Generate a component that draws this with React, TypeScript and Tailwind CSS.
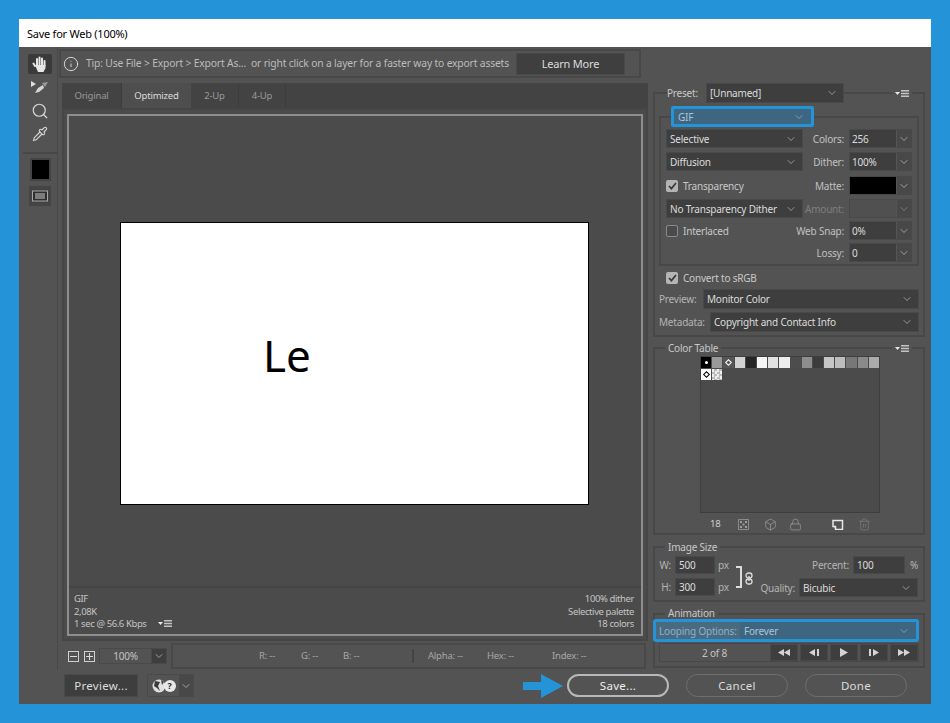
import * as React from 'react'
import { ChevronDown, Search, Pipette, Info, Box, Lock, Trash2 } from 'lucide-react'

const swatches = [
	'#000000', '#9a9a9a', '#555555', '#d2d2d2', '#252525', '#f6f6f6', '#e2e2e2', '#ececec',
	'#4d4d4d', '#8e8e8e', '#3c3c3c', '#c6c6c6', '#bdbdbd', '#777777', '#8a8a8a', '#ababab',
]

function MenuIcon() {
	return (
		<span className="flex items-center gap-px">
			<svg width="5" height="3" viewBox="0 0 5 3">
				<path d="M0 0h5L2.5 3z" fill="#e8e8e8" />
			</svg>
			<svg width="8" height="7" viewBox="0 0 8 7">
				<path d="M0 0h8v1.5H0zM0 2.7h8v1.5H0zM0 5.4h8V7H0z" fill="#c4c4c4" />
			</svg>
		</span>
	)
}

function Select({
	children,
	className,
	blue,
}: {
	children?: React.ReactNode
	className?: string
	blue?: boolean
}) {
	return (
		<div
			className={`flex items-center justify-between pl-[3px] pr-[5px] border shrink-0 ${
				blue
					? 'bg-[#3f6680] border-[#3f6680] text-[#a9c4d6]'
					: 'bg-[#3e3e3e] border-[#494949] text-[#dcdcdc]'
			} ${className ?? ''}`}
		>
			<span className="whitespace-nowrap">{children}</span>
			<ChevronDown size={12} strokeWidth={1.4} className={blue ? 'text-[#8fb4cc]' : 'text-[#bcbcbc]'} />
		</div>
	)
}

function Combo({ value, matte, off }: { value?: string; matte?: boolean; off?: boolean }) {
	return (
		<div className="flex w-[63px] h-[19px] border border-[#494949] shrink-0">
			<div
				className={`w-[47px] flex items-center pl-[2px] border-r border-[#555555] ${
					matte ? 'bg-black' : off ? 'bg-[#505050]' : 'bg-[#3e3e3e] text-[#dcdcdc]'
				}`}
			>
				{value}
			</div>
			<div className="flex-1 flex items-center justify-center bg-[#484848]">
				<ChevronDown size={12} strokeWidth={1.4} className={off ? 'text-[#8c8c8c]' : 'text-[#c4c4c4]'} />
			</div>
		</div>
	)
}

function Check({ checked, label }: { checked?: boolean; label: string }) {
	return (
		<div className="flex items-center gap-[5px] text-[#c8c8c8]">
			<span
				className={`w-[12px] h-[12px] rounded-[2px] flex items-center justify-center ${
					checked ? 'bg-[#b4b4b4]' : 'border border-[#8a8a8a] bg-[#4a4a4a]'
				}`}
			>
				{checked && (
					<svg width="9" height="8" viewBox="0 0 9 8">
						<path d="M1 4l2.4 2.6L8 1" fill="none" stroke="#3a3a3a" strokeWidth="1.7" />
					</svg>
				)}
			</span>
			{label}
		</div>
	)
}

function OptRow({
	left,
	label,
	children,
	className,
	dim,
}: {
	left: React.ReactNode
	label?: string
	children?: React.ReactNode
	className?: string
	dim?: boolean
}) {
	return (
		<div className={`flex items-center h-[19px] ${className ?? ''}`}>
			<div className="w-[137px] shrink-0">{left}</div>
			<span className={`flex-1 min-w-0 flex justify-end pr-[5px] whitespace-nowrap ${dim ? 'text-[#7e7e7e]' : 'text-[#c0c0c0]'}`}>
				{label}
			</span>
			{children}
		</div>
	)
}

function Field({ value, className }: { value: string; className?: string }) {
	return (
		<div className={`h-[18px] flex items-center pl-[3px] bg-[#3e3e3e] border border-[#494949] text-[#dcdcdc] ${className ?? ''}`}>
			{value}
		</div>
	)
}

function Transport({ d }: { d: string }) {
	return (
		<div className="w-[28px] h-[17px] flex items-center justify-center bg-[#3e3e3e] border border-[#494949]">
			<svg width="16" height="9" viewBox="0 0 16 9">
				<path d={d} fill="#d4d4d4" />
			</svg>
		</div>
	)
}

function RoundButton({ label, active, className }: { label: string; active?: boolean; className?: string }) {
	return (
		<div
			className={`w-[102px] h-[23px] rounded-full flex items-center justify-center text-[11.5px] tracking-wide ${
				active ? 'border-2 border-[#b8b8b8] text-[#eeeeee]' : 'border border-[#6e6e6e] text-[#dcdcdc]'
			} ${className ?? ''}`}
		>
			{label}
		</div>
	)
}

export default function App() {
	return (
		<div className="min-h-[723px] bg-[#2493d8] pt-[19px] pl-[19px] font-['Noto_Sans',sans-serif] text-[10px] leading-none tracking-[-0.2px]">
			<div className="w-[912px] h-[685px] flex flex-col overflow-hidden">
				<div className="h-[28px] shrink-0 bg-white text-black text-[11px] tracking-[-0.25px] flex items-center pl-[8px]">
					Save for Web (100%)
				</div>

				<div className="flex-1 flex flex-col bg-[#535353] text-[#c8c8c8]">
					<div className="flex h-[623px]">
						{/* tools */}
						<div className="w-[39px] shrink-0 border-r border-[#484848] flex flex-col items-center pt-[7px] pl-[4px]">
							<div className="w-[24px] h-[20px] bg-[#3a3a3a] rounded-[2px] flex items-center justify-center">
								<svg width="16" height="17" viewBox="0 0 16 17">
									<path
										d="M3 10L1.5 7.5M5 9V3M7.5 8.5V1.5M10 8.5V2.5M12.5 9.5V5"
										fill="none"
										stroke="#e6e6e6"
										strokeWidth="2"
										strokeLinecap="round"
									/>
									<path d="M3 9h10.5v3l-2 4H6z" fill="#e6e6e6" />
								</svg>
							</div>
							<div className="mt-[6px] h-[16px] flex items-center">
								<svg width="18" height="14" viewBox="0 0 18 14">
									<path d="M0 0l5 3-5 3z" fill="#e0e0e0" />
									<path d="M4 12l3-5 5-3 1 3-5 4z" fill="#d6d6d6" />
									<path d="M11 2l6-1-3 5z" fill="#9a9a9a" />
								</svg>
							</div>
							<Search size={18} strokeWidth={1.6} className="mt-[6px] text-[#d8d8d8]" />
							<Pipette size={16} strokeWidth={1.6} className="mt-[6px] text-[#d8d8d8]" />
							<div className="w-[34px] h-[2px] bg-[#474747] mt-[10px]" />
							<div className="mt-[4px] w-[21px] h-[23px] bg-black border-2 border-[#444444]" />
							<div className="mt-[5px] w-[22px] h-[20px] bg-[#444444] flex items-center justify-center">
								<svg width="16" height="12" viewBox="0 0 16 12">
									<rect x="0.5" y="1" width="15" height="10" fill="#2e2e2e" stroke="#a8a8a8" />
									<rect x="3" y="3" width="10" height="6" fill="#7c7c7c" />
								</svg>
							</div>
						</div>

						{/* center */}
						<div className="w-[592px] shrink-0">
							<div className="mt-[2px] ml-[1px] w-[582px] h-[29px] border-2 border-[#484848] flex items-center">
								<Info size={16} strokeWidth={1.4} className="ml-[2px] text-[#dcdcdc]" />
								<span className="ml-[7px] text-[10.3px] tracking-[-0.16px] text-[#bcbcbc] whitespace-pre">
									Tip: Use File &gt; Export &gt; Export As...  or right click on a layer for a faster way to export assets
								</span>
								<div className="ml-[7px] w-[109px] h-[22px] bg-[#3f3f3f] border border-[#494949] flex items-center justify-center text-[11px] text-[#dcdcdc]">
									Learn More
								</div>
							</div>

							<div className="mt-[5px] ml-[4px] w-[586px] h-[25px] flex bg-[#434343] text-[9.5px] text-[#9a9a9a]">
								<div className="w-[60px] flex items-center justify-center border-r border-[#3c3c3c]">Original</div>
								<div className="w-[69px] flex items-center justify-center bg-[#4e4e4e] text-[#dcdcdc]">Optimized</div>
								<div className="w-[48px] flex items-center justify-center border-r border-[#3c3c3c]">2-Up</div>
								<div className="w-[47px] flex items-center justify-center border-r border-[#3c3c3c]">4-Up</div>
							</div>

							<div className="ml-[4px] w-[586px] h-[533px] bg-[#4b4b4b] border-2 border-[#464646] pt-[4px] pl-[3px]">
								<div className="w-[576px] h-[522px] border-2 border-[#8e8e8e] flex flex-col">
									<div className="flex-1 flex items-center justify-center border-b-2 border-[#434343]">
										<div className="mt-[25px] w-[469px] h-[283px] -translate-x-[1px] bg-white border border-black flex items-center justify-center text-black">
											<span className="text-[44px] tracking-normal -translate-x-[67px] -translate-y-[9px]">Le</span>
										</div>
									</div>
									<div className="h-[46px] shrink-0 flex justify-between pl-[5px] pr-[7px] pt-[6px] text-[#c4c4c4] text-[9.5px] tracking-[-0.4px]">
										<div className="flex flex-col gap-[3px]">
											<span>GIF</span>
											<span>2,08K</span>
											<span className="flex items-center gap-[11px]">
												1 sec @ 56.6 Kbps <MenuIcon />
											</span>
										</div>
										<div className="flex flex-col gap-[3px] text-right">
											<span>100% dither</span>
											<span>Selective palette</span>
											<span>18 colors</span>
										</div>
									</div>
								</div>
							</div>

							<div className="flex items-center mt-[2px] h-[26px]">
								<div className="ml-[10px] w-[11px] h-[11px] border border-[#cfcfcf] flex items-center justify-center">
									<span className="w-[7px] h-px bg-[#dcdcdc]" />
								</div>
								<div className="ml-[5px] w-[11px] h-[11px] border border-[#cfcfcf] relative flex items-center justify-center">
									<span className="w-[7px] h-px bg-[#dcdcdc]" />
									<span className="absolute w-px h-[7px] bg-[#dcdcdc]" />
								</div>
								<div className="ml-[4px] w-[68px] h-[16px] flex border border-[#494949]">
									<span className="w-[52px] flex items-center justify-center text-[#c4c4c4] border-r border-[#494949]">100%</span>
									<span className="flex-1 flex items-center justify-center bg-[#3e3e3e]">
										<ChevronDown size={12} strokeWidth={1.4} className="text-[#c4c4c4]" />
									</span>
								</div>
								<div className="ml-[4px] w-[475px] h-[26px] border-2 border-[#484848] flex items-center text-[9.5px] text-[#a8a8a8] whitespace-nowrap">
									<span className="ml-[86px] w-[42px]">R: --</span>
									<span className="w-[42px]">G: --</span>
									<span className="w-[69px]">B: --</span>
									<span className="w-[2px] h-[14px] bg-[#444444]" />
									<span className="ml-[14px] w-[59px]">Alpha: --</span>
									<span className="w-[65px]">Hex: --</span>
									<span>Index: --</span>
								</div>
							</div>
						</div>

						{/* options */}
						<div className="w-[272px] shrink-0 ml-[3px] mt-[45px]">
							<div className="h-[245px] border-2 border-[#484848] px-[4px]">
								<div className="-mt-[11px] h-[20px] flex items-center pl-[8px]">
									<span className="bg-[#535353] pr-[8px] text-[#c8c8c8]">Preset:</span>
									<Select className="w-[138px] h-[20px]">[Unnamed]</Select>
									<span className="flex-1" />
									<span className="bg-[#535353] px-[3px] mr-[7px]">
										<MenuIcon />
									</span>
								</div>

								<div className="mt-[13px] h-[150px] border-2 border-[#484848] pl-[5px] pr-[5px]">
									<div className="-mt-[12px] ml-[5px] w-[143px] h-[21px] border-[3px] border-[#2493d8] rounded-[2px] bg-[#3f6680]">
										<Select blue className="w-full h-full">GIF</Select>
									</div>
									<OptRow className="mt-[2px]" left={<Select className="h-[19px]">Selective</Select>} label="Colors:">
										<Combo value="256" />
									</OptRow>
									<OptRow className="mt-[4px]" left={<Select className="h-[19px]">Diffusion</Select>} label="Dither:">
										<Combo value="100%" />
									</OptRow>
									<OptRow className="mt-[5px]" left={<Check checked label="Transparency" />} label="Matte:">
										<Combo matte />
									</OptRow>
									<OptRow className="mt-[4px]" left={<Select className="h-[19px]">No Transparency Dither</Select>} label="Amount:" dim>
										<Combo off />
									</OptRow>
									<OptRow className="mt-[3px]" left={<Check label="Interlaced" />} label="Web Snap:">
										<Combo value="0%" />
									</OptRow>
									<OptRow className="mt-[3px]" left={null} label="Lossy:">
										<Combo value="0" />
									</OptRow>
								</div>

								<div className="mt-[6px] ml-[7px]">
									<Check checked label="Convert to sRGB" />
								</div>
								<div className="flex items-center mt-[5px] h-[20px] text-[#b4b4b4]">
									<span className="w-[44px] shrink-0">Preview:</span>
									<Select className="flex-1 h-[20px]">Monitor Color</Select>
								</div>
								<div className="flex items-center mt-[3px] h-[20px] text-[#b4b4b4]">
									<span className="w-[51px] shrink-0">Metadata:</span>
									<Select className="flex-1 h-[20px]">Copyright and Contact Info</Select>
								</div>
							</div>

							<div className="mt-[10px] h-[188px] border-2 border-[#484848]">
								<div className="-mt-[9px] h-[16px] flex items-center pl-[10px]">
									<span className="bg-[#535353] px-[3px] text-[#c8c8c8]">Color Table</span>
									<span className="flex-1" />
									<span className="bg-[#535353] px-[3px] mr-[11px]">
										<MenuIcon />
									</span>
								</div>
								<div className="ml-[45px] w-[180px] h-[157px] bg-[#4b4b4b] border border-[#3e3e3e] grid grid-cols-[repeat(16,1fr)] auto-rows-[11px] content-start gap-[1px]">
									{swatches.map((c, i) => (
										<div key={i} style={{ backgroundColor: c }} className="flex items-center justify-center">
											{i === 0 && <span className="w-[3px] h-[3px] rounded-full bg-white" />}
											{i === 2 && <span className="w-[5px] h-[5px] rotate-45 border border-white" />}
										</div>
									))}
									<div className="bg-white flex items-center justify-center">
										<span className="w-[5px] h-[5px] rotate-45 border border-black" />
									</div>
									<div className="bg-[repeating-conic-gradient(#bbbbbb_0_25%,#eeeeee_0_50%)] bg-[length:5px_5px]" />
								</div>
								<div className="h-[22px] flex items-center text-[#9c9c9c]">
									<span className="ml-[55px] w-[20px] text-[#d0d0d0] text-[9.5px]">18</span>
									<svg className="ml-[8px]" width="11" height="11" viewBox="0 0 11 11">
										<path d="M0.5 0.5h10v10h-10z" fill="none" stroke="#8c8c8c" />
										<path d="M2 2h2v2H2zM7 2h2v2H7zM4.5 4.5h2v2h-2zM2 7h2v2H2zM7 7h2v2H7z" fill="#9c9c9c" />
									</svg>
									<Box size={13} strokeWidth={1.3} className="ml-[15px]" />
									<Lock size={13} strokeWidth={1.3} className="ml-[12px]" />
									<svg className="ml-[30px]" width="12" height="12" viewBox="0 0 12 12">
										<path d="M1 2.5h9.5v9h-7v-3H1z" fill="none" stroke="#e8e8e8" strokeWidth="1.5" />
										<path d="M1 8l3 3V8z" fill="#e8e8e8" />
									</svg>
									<Trash2 size={13} strokeWidth={1.3} className="ml-[14px] text-[#7e7e7e]" />
								</div>
							</div>

							<div className="mt-[11px] h-[56px] border-2 border-[#484848]">
								<div className="-mt-[8px] h-[14px] flex items-center pl-[10px]">
									<span className="bg-[#535353] px-[3px] text-[#c8c8c8]">Image Size</span>
								</div>
								<div className="flex mt-[2px] text-[#b4b4b4]">
									<div className="w-[78px] shrink-0 pl-[4px] flex flex-col gap-[4px]">
										<div className="flex items-center gap-[4px]">
											<span className="w-[12px] text-right">W:</span>
											<Field value="500" className="w-[40px]" />
											<span className="ml-[-1px]">px</span>
										</div>
										<div className="flex items-center gap-[4px]">
											<span className="w-[12px] text-right">H:</span>
											<Field value="300" className="w-[40px]" />
											<span className="ml-[-1px]">px</span>
										</div>
									</div>
									<div className="w-[6px] h-[22px] mt-[10px] ml-[3px] border-2 border-l-0 border-[#dcdcdc]" />
									<svg className="mt-[16px] ml-[3px]" width="8" height="13" viewBox="0 0 8 13">
										<rect x="1" y="1" width="6" height="5" rx="2.5" fill="none" stroke="#dcdcdc" strokeWidth="1.3" />
										<rect x="1" y="7" width="6" height="5" rx="2.5" fill="none" stroke="#dcdcdc" strokeWidth="1.3" />
										<path d="M4 4v5" stroke="#dcdcdc" strokeWidth="1.3" />
									</svg>
									<div className="flex-1 flex flex-col gap-[4px] ml-[5px] pr-[5px]">
										<div className="flex items-center justify-end">
											<span>Percent:</span>
											<Field value="100" className="ml-[4px] w-[52px]" />
											<span className="w-[13px] text-right">%</span>
										</div>
										<div className="flex items-center justify-end">
											<span>Quality:</span>
											<Select className="ml-[4px] w-[119px] h-[19px]">Bicubic</Select>
										</div>
									</div>
								</div>
							</div>

							<div className="mt-[11px] h-[55px] border-2 border-[#484848] pl-[4px] pr-[4px]">
								<div className="-mt-[9px] h-[13px] flex items-center pl-[6px]">
									<span className="bg-[#535353] px-[3px] text-[#c8c8c8]">Animation</span>
								</div>
								<div className="-ml-[6px] w-[266px] h-[23px] border-[3px] border-[#2493d8] rounded-[3px] flex bg-[#3f6680]">
									<span className="w-[84px] pl-[3px] flex items-center bg-[#4a6a80] text-[#8fb0c6] whitespace-nowrap">
										Looping Options:
									</span>
									<Select blue className="flex-1 h-full">Forever</Select>
								</div>
								<div className="h-[19px] w-[260px] mt-px border border-[#484848] flex items-center justify-between">
									<span className="ml-[42px] text-[#c4c4c4]">2 of 8</span>
									<div className="flex gap-[2px]">
										<Transport d="M8 1v7L2 4.5zM14 1v7L8 4.5z" />
										<Transport d="M9 1v7L3 4.5zM11 1h2v7h-2z" />
										<Transport d="M4 0l8 4.5L4 9z" />
										<Transport d="M3 1h2v7H3zM7 1l6 3.5L7 8z" />
										<Transport d="M2 1l6 3.5L2 8zM8 1l6 3.5L8 8z" />
									</div>
								</div>
							</div>
						</div>
					</div>

					{/* bottom buttons */}
					<div className="flex items-center h-[31px] pl-[45px]">
						<div className="w-[74px] h-[23px] bg-[#3e3e3e] border border-[#4a4a4a] flex items-center justify-center text-[11.5px] tracking-wide text-[#dcdcdc]">
							Preview...
						</div>
						<div className="ml-[9px] w-[47px] h-[23px] flex border border-[#4a4a4a]">
							<span className="w-[31px] flex items-center justify-center">
								<svg width="22" height="14" viewBox="0 0 22 14">
									<circle cx="7" cy="7" r="6.5" fill="#e0e0e0" />
									<path d="M3 2l5 1-2 4 2 5-3-3-3-2zM9 1l3 2-2 3z" fill="#3a3a3a" />
								</svg>
								<span className="-ml-[10px] w-[12px] h-[12px] rounded-full bg-[#e8e8e8] text-[#2a2a2a] text-[9px] font-bold flex items-center justify-center">?</span>
							</span>
							<span className="flex-1 bg-[#484848] flex items-center justify-center">
								<ChevronDown size={12} strokeWidth={1.4} className="text-[#c4c4c4]" />
							</span>
						</div>
						<svg className="ml-[329px]" width="42" height="24" viewBox="0 0 42 24">
							<path d="M0 8h18V0l22 12-22 12v-8H0z" fill="#2493d8" />
						</svg>
						<RoundButton label="Save..." active className="ml-[2px]" />
						<RoundButton label="Cancel" className="ml-[17px]" />
						<RoundButton label="Done" className="ml-[17px]" />
					</div>
				</div>
			</div>
		</div>
	)
}
